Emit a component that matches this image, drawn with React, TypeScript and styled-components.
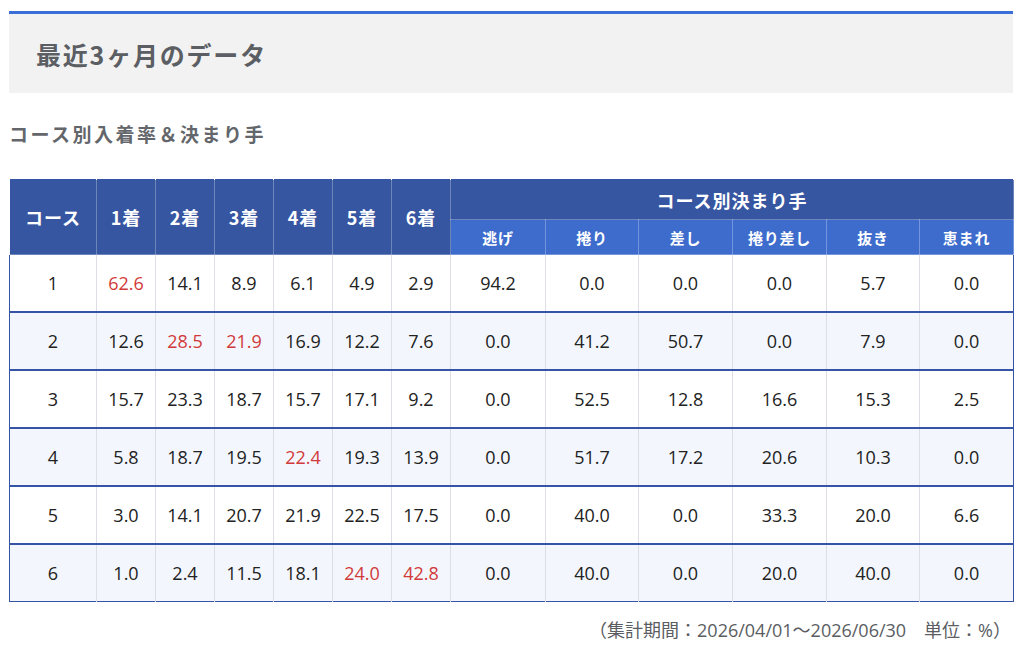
import React from "react";
import styled, { createGlobalStyle } from "styled-components";

const GlobalStyle = createGlobalStyle`
  html, body {
    margin: 0;
    padding: 0;
    background: #fff;
  }
  body {
    font-family: "Noto Sans CJK JP", "Noto Sans", sans-serif;
    color: #333;
  }
`;

const Page = styled.div`
  padding: 11px 11px 0 9px;
`;

const SectionTitle = styled.h2`
  margin: 0;
  height: 79px;
  display: flex;
  align-items: center;
  padding-left: 27px;
  background: #f2f2f2;
  border-top: 3px solid #3a6fd8;
  color: #5b5e63;
  font-size: 25px;
  font-weight: 700;
  letter-spacing: 1.8px;
`;

const SubTitle = styled.h3`
  margin: 27px 0 0;
  height: 28px;
  line-height: 28px;
  color: #63666b;
  font-size: 19px;
  font-weight: 700;
  letter-spacing: 2.5px;
`;

const Table = styled.table`
  margin-top: 31px;
  width: 100%;
  border-collapse: collapse;
  table-layout: fixed;
  border: 1px solid #3554a5;
`;

const Head = styled.th<{ $sub?: boolean }>`
  background: ${(p) => (p.$sub ? "#3e6ccd" : "#3756a2")};
  color: #fff;
  font-weight: 700;
  font-size: ${(p) => (p.$sub ? "15px" : "18px")};
  letter-spacing: ${(p) => (p.$sub ? "0.8px" : "1px")};
  height: ${(p) => (p.$sub ? "34px" : "39px")};
  padding: 0;
  text-align: center;
  border: 1px solid rgba(255, 255, 255, 0.28);
  border-top: none;
`;

const Row = styled.tr<{ $alt: boolean }>`
  background: ${(p) => (p.$alt ? "#f3f7fd" : "#fff")};
  border-top: 2px solid #3554a5;
  &:first-child {
    border-top: none;
  }
`;

const Cell = styled.td<{ $hot?: boolean }>`
  height: 56px;
  padding: 0;
  text-align: center;
  font-family: "Open Sans", "Noto Sans CJK JP", sans-serif;
  font-size: 18px;
  color: ${(p) => (p.$hot ? "#d13a3a" : "#222")};
  border-left: 1px solid #dcdfe5;
  &:first-child {
    border-left: none;
  }
`;

const Note = styled.p`
  margin: 14px 2px 0 0;
  text-align: right;
  font-family: "Open Sans", "Noto Sans CJK JP", sans-serif;
  font-size: 18px;
  color: #5a5d62;
`;

const colWidths = [87, 59, 59, 59, 59, 59, 59, 95, 93, 94, 94, 93, 94];

const rows: { course: number; places: string[]; kimarite: string[]; hot: number[] }[] = [
  { course: 1, places: ["62.6", "14.1", "8.9", "6.1", "4.9", "2.9"], kimarite: ["94.2", "0.0", "0.0", "0.0", "5.7", "0.0"], hot: [0] },
  { course: 2, places: ["12.6", "28.5", "21.9", "16.9", "12.2", "7.6"], kimarite: ["0.0", "41.2", "50.7", "0.0", "7.9", "0.0"], hot: [1, 2] },
  { course: 3, places: ["15.7", "23.3", "18.7", "15.7", "17.1", "9.2"], kimarite: ["0.0", "52.5", "12.8", "16.6", "15.3", "2.5"], hot: [] },
  { course: 4, places: ["5.8", "18.7", "19.5", "22.4", "19.3", "13.9"], kimarite: ["0.0", "51.7", "17.2", "20.6", "10.3", "0.0"], hot: [3] },
  { course: 5, places: ["3.0", "14.1", "20.7", "21.9", "22.5", "17.5"], kimarite: ["0.0", "40.0", "0.0", "33.3", "20.0", "6.6"], hot: [] },
  { course: 6, places: ["1.0", "2.4", "11.5", "18.1", "24.0", "42.8"], kimarite: ["0.0", "40.0", "0.0", "20.0", "40.0", "0.0"], hot: [4, 5] },
];

const placeHeads = ["1着", "2着", "3着", "4着", "5着", "6着"];
const kimariteHeads = ["逃げ", "捲り", "差し", "捲り差し", "抜き", "恵まれ"];

export default function App() {
  return (
    <>
      <GlobalStyle />
      <Page>
        <SectionTitle>最近3ヶ月のデータ</SectionTitle>
        <SubTitle>コース別入着率＆決まり手</SubTitle>
        <Table>
          <colgroup>
            {colWidths.map((w, i) => (
              <col key={i} style={{ width: w }} />
            ))}
          </colgroup>
          <thead>
            <tr>
              <Head rowSpan={2}>コース</Head>
              {placeHeads.map((h) => (
                <Head key={h} rowSpan={2}>
                  {h}
                </Head>
              ))}
              <Head colSpan={6}>コース別決まり手</Head>
            </tr>
            <tr>
              {kimariteHeads.map((h) => (
                <Head key={h} $sub>
                  {h}
                </Head>
              ))}
            </tr>
          </thead>
          <tbody>
            {rows.map((r, i) => (
              <Row key={r.course} $alt={i % 2 === 1}>
                <Cell>{r.course}</Cell>
                {r.places.map((v, j) => (
                  <Cell key={j} $hot={r.hot.includes(j)}>
                    {v}
                  </Cell>
                ))}
                {r.kimarite.map((v, j) => (
                  <Cell key={`k${j}`}>{v}</Cell>
                ))}
              </Row>
            ))}
          </tbody>
        </Table>
        <Note>（集計期間：2026/04/01～2026/06/30　単位：%）</Note>
      </Page>
    </>
  );
}
